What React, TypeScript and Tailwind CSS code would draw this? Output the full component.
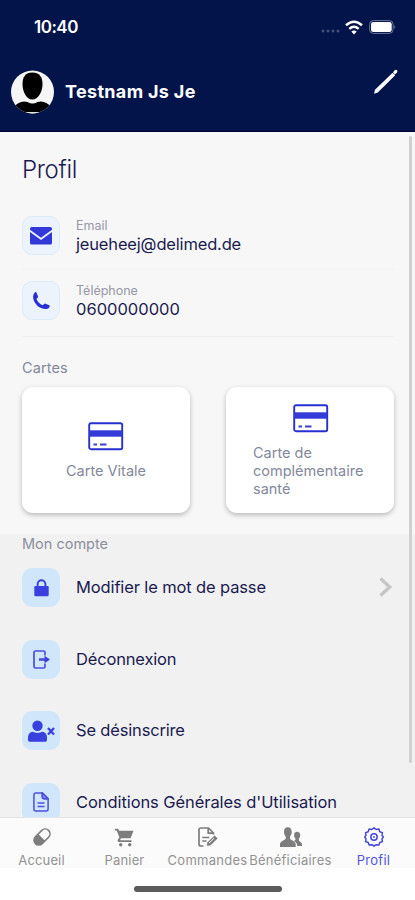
import React from "react";

const FONT = "font-['Inter','Liberation_Sans',sans-serif]";

function Card() {
  return (
    <svg width="36" height="29" viewBox="0 0 36 29" fill="none">
      <rect x="1.2" y="1.2" width="33" height="26" rx="1.8" stroke="#2830d2" strokeWidth="1.9" />
      <rect x="1.5" y="8.3" width="32.5" height="6.4" fill="#343bd8" />
      <path d="M5.5 22.5h3.5M12 22.5h6.5" stroke="#3a40cf" strokeWidth="2" />
    </svg>
  );
}

function Mail() {
  return (
    <svg width="22" height="18" viewBox="0 0 22 18" fill="#3239d8">
      <path d="M1.6 0h18.8Q22 0 22 1.6v1.2L11 10.8 0 2.8V1.6Q0 0 1.6 0zM0 5l11 8 11-8v11q0 1.600-1.600 1.600H1.600Q0 17.600 0 16z" />
    </svg>
  );
}

function Phone() {
  return (
    <svg width="17" height="18" viewBox="0 0 17 18" fill="#2830d4">
      <path d="M3.300.3 5 4.200q.3.800-.3 1.400L3.500 6.900q1.700 4.500 6.300 6.400l1.300-1.300q.6-.6 1.400-.3l3.700 1.600q.7.300.5 1.100-.6 2.300-3 2.600Q8 17.300 3.900 13.200-.2 9 .1 4.200.4 1.400 2.300.1q.7-.4 1 .2z" />
    </svg>
  );
}

function Lock() {
  return (
    <svg width="15" height="18" viewBox="0 0 15 18">
      <path d="M3.600 8V5.200a3.900 3.900 0 0 1 7.800 0V8" fill="none" stroke="#3940dd" strokeWidth="1.900" />
      <rect x="0.300" y="7" width="14.400" height="10.300" rx="1.300" fill="#3940dd" />
    </svg>
  );
}

function Logout() {
  return (
    <svg width="17" height="19" viewBox="0 0 17 19" fill="none" stroke="#4b50df" strokeWidth="1.700">
      <path d="M12 5.500V2.500q0-1.500-1.500-1.500H2.500Q1 1 1 2.500v14Q1 18 2.500 18h8q1.500 0 1.500-1.500v-3" />
      <path d="M6 9.500h7" strokeWidth="2.600" />
      <path d="M11.500 5.700 17 9.500l-5.500 3.800z" fill="#3940dd" stroke="none" />
    </svg>
  );
}

function UserX() {
  return (
    <svg width="27" height="22" viewBox="0 0 27 22" fill="#3940dd">
      <circle cx="9.500" cy="5.700" r="5.200" />
      <path d="M4.300 11.800q5.200 2.300 10.400 0Q19 13 19 17.500V20q0 1.700-1.700 1.700H1.700Q0 21.700 0 20v-2.500Q0 13 4.300 11.800z" />
      <path d="m20 8 6 6.500m0-6.500-6 6.500" stroke="#3940dd" strokeWidth="2.300" />
    </svg>
  );
}

function Doc() {
  return (
    <svg width="16" height="20" viewBox="0 0 16 20" fill="none" stroke="#4b50df" strokeWidth="1.500">
      <path d="M3 .9h6.500L15.100 6.500V17q0 2-2 2H3q-2.100 0-2.100-2V3Q.9.9 3 .9zM9.300 1v3.700q0 2 2 2H15M4.500 11h7M4.500 14.500h7" />
      <path d="M9.300 1 15 6.700h-3.500q-2.200 0-2.200-2.200z" fill="#4b50df" fillOpacity=".45" />
    </svg>
  );
}

function Pill() {
  return (
    <svg width="20" height="20" viewBox="0 0 20 20">
      <g transform="rotate(45 10 10)">
        <rect x="5.200" y="0.700" width="9.600" height="18.600" rx="4.800" fill="none" stroke="#7d7d7d" strokeWidth="1.600" />
        <path d="M5.200 10.500h9.600v4a4.800 4.800 0 0 1-9.600 0z" fill="#7d7d7d" />
      </g>
    </svg>
  );
}

function Cart() {
  return (
    <svg width="19" height="19" viewBox="0 0 19 19" fill="#7d7d7d">
      <path d="M0 .8h3.200l1 2H18.500L15.600 10.200H6l-1.100 2h11.600v1.700H3.600q-1.500-.3-.9-1.800L4.400 9.300 1.700 2.500H0z" />
      <circle cx="5.700" cy="16.700" r="1.700" />
      <circle cx="14.700" cy="16.700" r="1.700" />
    </svg>
  );
}

function Order() {
  return (
    <svg width="20" height="20" viewBox="0 0 20 20" fill="none" stroke="#7d7d7d" strokeWidth="1.700">
      <path d="M5.500 19H3q-2 0-2-2V3q0-2 2-2h7.500l5 5v1.500M10.200 1v5.200h5M4.300 10.500h7M4.300 14h4.200" />
      <path d="m8.800 18.700.5-3.200 7.300-7 3 3-7.300 6.900z" fill="#7d7d7d" stroke="none" />
      <path d="m11 16 5-4.700" stroke="#fbfbfb" strokeWidth="1" />
    </svg>
  );
}

function People() {
  return (
    <svg width="22" height="21" viewBox="0 0 22 21" fill="#7d7d7d">
      <path d="M7.800.3c2.700 0 3.900 1.800 3.900 4.500 0 2-.7 3.500-1.700 4.700v2.300c.7 1.700 5.500 2 5.700 5.500V20H0v-2.700c.2-3.500 5-3.800 5.700-5.500V9.500C4.600 8.300 4 6.800 4 4.800 4 2.100 5.100.3 7.800.3z" />
      <path d="M17.100 4.800c2.200 0 3.100 1.500 3.100 3.500 0 1.500-.6 2.700-1.300 3.500v1.500c.5 1.400 3 1.700 3.100 4.200v1.400h-4.700c-.2-2.800-1.800-4-3.600-4.800.8-.5 1.500-.8 1.700-1.300v-1.300c-.8-.8-1.300-1.800-1.300-3.200 0-2 .8-3.500 3-3.500z" />
    </svg>
  );
}

function Gear() {
  return (
    <svg width="20" height="20" viewBox="0 0 20 20" fill="none" stroke="#4247df" strokeWidth="1.500" strokeLinejoin="round">
      <path d="M7.800 2.500 10 .8l2.200 1.700 2.700-.4.900 2.600 2.600.9-.4 2.700L19.300 10l-1.300 1.900.4 2.700-2.600.9-.9 2.500-2.700-.3-2.200 1.500-2.200-1.500-2.700.3-.9-2.500-2.600-.9.400-2.700L.7 10 2 8.300l-.4-2.700 2.600-.9.900-2.600z" />
      <circle cx="10" cy="10" r="3.200" />
      <circle cx="10" cy="10" r="0.300" />
    </svg>
  );
}

function Tile({ children, pale = false }: { children: React.ReactNode; pale?: boolean }) {
  return (
    <div className={`flex h-[39px] w-[38px] shrink-0 items-center justify-center rounded-[10px] ${pale ? "border border-[#dceafa] bg-[#ecf3fc]" : "bg-[#cfe6fb]"}`}>
      {children}
    </div>
  );
}

function Field({ icon, label, value, labelClass, valueClass }: { icon: React.ReactNode; label: string; value: string; labelClass: string; valueClass: string }) {
  return (
    <div className="flex h-[39px] gap-4">
      <Tile pale>{icon}</Tile>
      <div className="whitespace-nowrap pt-[2px]">
        <div className={`h-4 text-[12.5px] leading-4 text-[#9698a5] ${labelClass}`}>{label}</div>
        <div className={`h-5 text-[16.5px] leading-5 text-[#1b1b50] ${valueClass}`}>{value}</div>
      </div>
    </div>
  );
}

function Action({ icon, text, textClass, arrow = false }: { icon: React.ReactNode; text: string; textClass: string; arrow?: boolean }) {
  return (
    <div className="flex h-[71.6px] shrink-0 items-start">
      <Tile>{icon}</Tile>
      <div className={`ml-4 flex-1 whitespace-nowrap text-[16.5px] leading-[39px] text-[#1b1b50] ${textClass}`}>{text}</div>
      {arrow && (
        <svg className="mr-[1px] mt-[9px]" width="14" height="20" viewBox="0 0 14 20" fill="none" stroke="#c6c6c6" strokeWidth="3.400">
          <path d="m1.500 1.500 9.200 8.500-9.200 8.500" />
        </svg>
      )}
    </div>
  );
}

function Tab({ icon, text, textClass, active = false }: { icon: React.ReactNode; text: string; textClass: string; active?: boolean }) {
  return (
    <div className="flex w-[83px] flex-col items-center">
      <div className="flex h-[39px] items-center justify-center">{icon}</div>
      <div className={`-mt-[4px] whitespace-nowrap text-[13px] leading-4 ${active ? "text-[#5055e2]" : "text-[#929292]"} ${textClass}`}>{text}</div>
    </div>
  );
}

export default function App() {
  return (
    <div className={`flex h-[900px] w-[415px] flex-col overflow-hidden bg-white ${FONT}`}>
      <header className="h-[132px] shrink-0 border-b border-[#010038] bg-[#021449] text-white">
        <div className="flex h-[54px] items-center pl-[34px] pr-[19px]">
          <div className="flex-1 text-[17px] font-semibold leading-5 tracking-[-0.5px]">10:40</div>
          <svg className="mt-[8px]" width="19" height="4" viewBox="0 0 19 4" fill="#43507c">
            <circle cx="2" cy="2" r="1.500" /><circle cx="7" cy="2" r="1.500" /><circle cx="12" cy="2" r="1.500" /><circle cx="17" cy="2" r="1.500" />
          </svg>
          <svg className="ml-[5px]" width="18" height="15" viewBox="0 0 18 15" fill="none" stroke="white" strokeWidth="2.500">
            <path d="M1 5.300q8-7.200 16 0M4.300 8.900q4.700-4.200 9.400 0" />
            <path d="M6.300 11.500q2.700-2.200 5.400 0L9 14.500z" fill="white" stroke="none" />
          </svg>
          <svg className="ml-[6px]" width="27" height="14" viewBox="0 0 27 14">
            <rect x=".6" y=".6" width="23.500" height="12.800" rx="3.800" fill="none" stroke="#6b7597" />
            <rect x="2" y="2" width="20.700" height="10" rx="2.300" fill="white" />
            <path d="M25.300 5q2 2 0 4z" fill="#6b7597" />
          </svg>
        </div>
        <div className="flex h-[75px] items-center pl-[11px] pr-[17px]">
          <svg width="43" height="44" viewBox="0 0 43 44">
            <defs><clipPath id="avatar"><circle cx="21.500" cy="22" r="21.500" /></clipPath></defs>
            <g clipPath="url(#avatar)">
              <rect width="43" height="44" fill="#f5f5f5" />
              <path d="M21.300 2.500c7 0 10.200 4.500 10.200 11.500 0 8-4.500 15.500-10.200 15.500S11.500 22 11.500 14c0-7 3-11.500 9.800-11.500z" fill="black" />
              <path d="M4 36q3-4 9-4.500l3.500.5q5 3 10 0l3.500-.5Q36 32 39 36v6H4z" fill="black" />
              <path d="M14 43.500q7.500-1.200 15 0" fill="none" stroke="#ddd" strokeWidth="1.500" />
            </g>
          </svg>
          <div className="ml-[11px] flex-1 whitespace-nowrap text-[18px] font-bold leading-6 tracking-[0.33px]">Testnam Js Je</div>
          <svg className="-mt-[21px]" width="24" height="25" viewBox="0 0 24 25" fill="white">
            <path d="M1 20.800 18.600 3.700l2.600 2.600L3.800 23.400 0 24.700zM19 3.300l2-2.200q1-.8 2 .1.900 1.100 0 2.200l-2.100 2z" />
          </svg>
        </div>
      </header>

      <div className="flex h-[685px] shrink-0 overflow-hidden bg-[linear-gradient(#f7f7f7_402px,#f1f1f1_402px)]">
        <main className="h-[685px] w-[409px] overflow-hidden pl-[22px] pr-[15px]">
          <h1 className="pt-[22px] text-[24px] font-light leading-8 tracking-[-0.35px] text-[#1b1b50]">Profil</h1>
          <div className="mt-[30px] h-[54px] border-b border-[#f2f2f2]">
            <Field icon={<Mail />} label="Email" value="jeueheej@delimed.de" labelClass="" valueClass="tracking-[-0.17px]" />
          </div>
          <div className="h-[67px] border-b border-[#eeeeee] pt-[11px]">
            <Field icon={<Phone />} label="Téléphone" value="0600000000" labelClass="" valueClass="" />
          </div>
          <div className="pt-[21px] text-[14.500px] leading-5 tracking-[0.1px] text-[#83889a]">Cartes</div>
          <div className="mt-[9px] flex justify-between">
            <div className="flex h-[126px] w-[168px] flex-col items-center rounded-[11px] bg-white pt-[35px] shadow-[0_2px_5px_rgba(0,0,0,0.25)]">
              <Card />
              <div className="mt-[11px] whitespace-nowrap text-[14.500px] leading-[18px] text-[#83889a]">Carte Vitale</div>
            </div>
            <div className="flex h-[126px] w-[168px] flex-col items-center rounded-[11px] bg-white pl-px pt-[17px] shadow-[0_2px_5px_rgba(0,0,0,0.25)]">
              <Card />
              <div className="mt-[11px] w-[115px] whitespace-nowrap text-[14.500px] leading-[18px] text-[#83889a]">Carte de<br />complémentaire<br />santé</div>
            </div>
          </div>
          <div className="mt-[21px] h-[34px] text-[14.500px] leading-5 text-[#8c8f9c]">Mon compte</div>
          <Action icon={<Lock />} text="Modifier le mot de passe" textClass="tracking-[-0.13px]" arrow />
          <Action icon={<Logout />} text="Déconnexion" textClass="tracking-[-0.17px]" />
          <Action icon={<UserX />} text="Se désinscrire" textClass="tracking-[-0.17px]" />
          <Action icon={<Doc />} text="Conditions Générales d'Utilisation" textClass="tracking-[-0.08px]" />
        </main>
        <div className="mt-[4px] h-[627px] w-[3px] rounded-full bg-[#d0d0d0]" />
      </div>

      <nav className="flex h-[51px] shrink-0 border-t border-[#e4e4e4] bg-[#fbfbfb]">
        <Tab icon={<Pill />} text="Accueil" textClass="tracking-[0.15px]" />
        <Tab icon={<Cart />} text="Panier" textClass="tracking-[0.15px]" />
        <Tab icon={<Order />} text="Commandes" textClass="tracking-[0.27px]" />
        <Tab icon={<People />} text="Bénéficiaires" textClass="tracking-[0.22px]" />
        <Tab icon={<Gear />} text="Profil" textClass="tracking-[0.25px]" active />
      </nav>
      <div className="flex h-8 shrink-0 justify-center pt-[18px]">
        <div className="h-[6px] w-[148px] rounded-full bg-[#5b5c5b]" />
      </div>
    </div>
  );
}
